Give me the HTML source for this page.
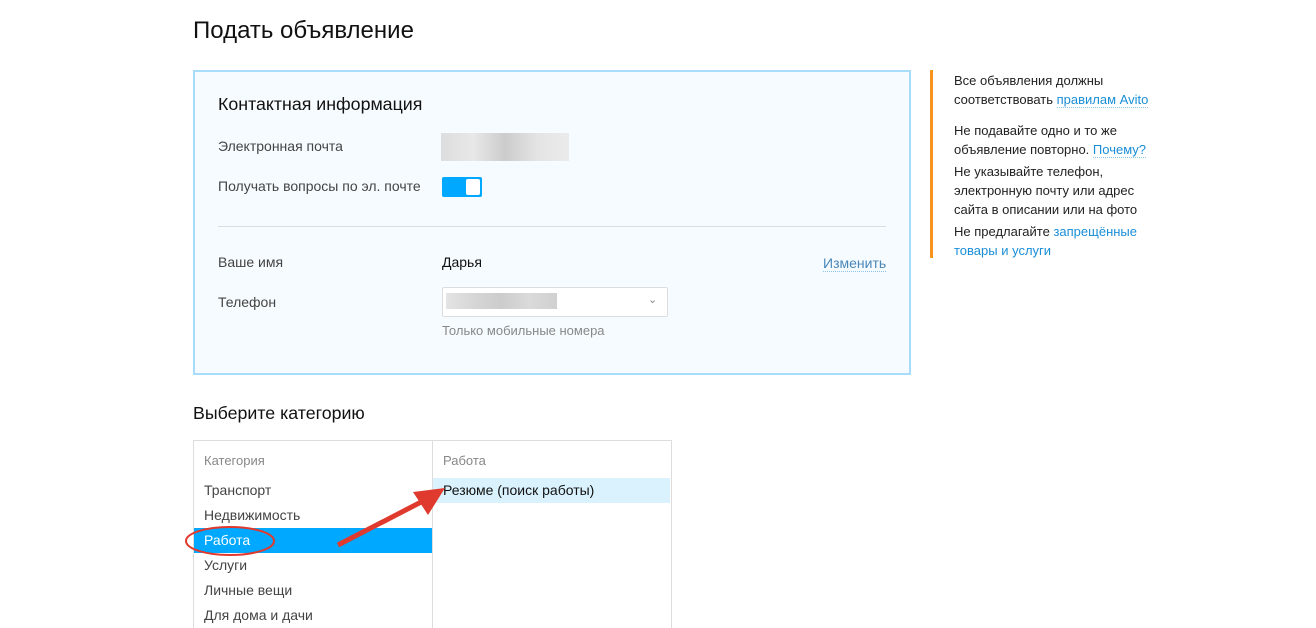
<!DOCTYPE html>
<html><head><meta charset="utf-8"><style>
html,body{margin:0;width:1316px;height:628px;overflow:hidden}
body{background:#fff;font-family:"Liberation Sans",Arial,sans-serif;position:relative;color:#222}
.a{position:absolute;white-space:nowrap}
.lbl{font-size:14px;color:#444}
.link{color:#1a8ed6;border-bottom:1px dotted #8cc3e8}
</style></head><body>
<div class="a" style="left:193px;top:17px;font-size:24px;color:#111">Подать объявление</div>
<div class="a" style="left:193px;top:70px;width:714px;height:301px;border:2px solid #a7dcfa;background:#f5fbff"></div>
<div class="a" style="left:218px;top:94px;font-size:17.8px;color:#111">Контактная информация</div>
<div class="a lbl" style="left:218px;top:138px">Электронная почта</div>
<div class="a" style="left:441px;top:133px;width:128px;height:28px;background:linear-gradient(90deg,#ddd,#e8e8e8,#ccc,#e4e4e4,#ebebeb)"></div>
<div class="a lbl" style="left:218px;top:178px">Получать вопросы по эл. почте</div>
<div class="a" style="left:442px;top:177px;width:40px;height:20px;background:#00a8ff;border-radius:2px"></div>
<div class="a" style="left:466px;top:179px;width:14px;height:16px;background:#fff;border-radius:2px"></div>
<div class="a" style="left:218px;top:226px;width:668px;height:1px;background:#ddd"></div>
<div class="a lbl" style="left:218px;top:254px">Ваше имя</div>
<div class="a" style="left:442px;top:254px;font-size:14px;color:#111">Дарья</div>
<div class="a link" style="left:823px;top:255px;font-size:14px;color:#4a86b8">Изменить</div>
<div class="a lbl" style="left:218px;top:294px">Телефон</div>
<div class="a" style="left:442px;top:287px;width:224px;height:28px;border:1px solid #ddd;background:#fff;border-radius:2px"></div>
<div class="a" style="left:446px;top:293px;width:111px;height:16px;background:linear-gradient(90deg,#e4e4e4,#d6d6d6,#ccc,#dadada,#d0d0d0)"></div>
<div class="a" style="left:648px;top:293px;font-size:11px;color:#888">&#8964;</div>
<div class="a" style="left:442px;top:323px;font-size:13px;color:#888">Только мобильные номера</div>
<div class="a" style="left:930px;top:70px;width:3px;height:188px;background:#f7941d"></div>
<div class="a" style="left:954px;top:71px;font-size:13px;line-height:19px;color:#222">Все объявления должны<br>соответствовать <span class="link">правилам Avito</span></div>
<div class="a" style="left:954px;top:121px;font-size:13px;line-height:19px;color:#222">Не подавайте одно и то же<br>объявление повторно. <span class="link">Почему?</span></div>
<div class="a" style="left:954px;top:162px;font-size:13px;line-height:19px;color:#222">Не указывайте телефон,<br>электронную почту или адрес<br>сайта в описании или на фото</div>
<div class="a" style="left:954px;top:222px;font-size:13px;line-height:19px;color:#222">Не предлагайте <span style="color:#1a8ed6">запрещённые</span><br><span style="color:#1a8ed6">товары и услуги</span></div>
<div class="a" style="left:193px;top:403px;font-size:17.8px;color:#111">Выберите категорию</div>
<div class="a" style="left:193px;top:440px;width:477px;height:188px;border:1px solid #ddd;border-bottom:none"></div>
<div class="a" style="left:432px;top:440px;width:1px;height:188px;background:#ddd"></div>
<div class="a" style="left:204px;top:453px;font-size:13px;color:#888">Категория</div>
<div class="a" style="left:443px;top:453px;font-size:13px;color:#888">Работа</div>
<div class="a" style="left:433px;top:478px;width:237px;height:25px;background:#daf2fd"></div>
<div class="a" style="left:443px;top:482px;font-size:14px;color:#111">Резюме (поиск работы)</div>
<div class="a" style="left:194px;top:528px;width:238px;height:25px;background:#00a8ff"></div>
<div class="a" style="left:204px;top:478px;font-size:14px;line-height:25px;color:#444">Транспорт<br>Недвижимость<br><span style="color:#fff">Работа</span><br>Услуги<br>Личные вещи<br>Для дома и дачи</div>
<svg class="a" style="left:0;top:0" width="1316" height="628">
<ellipse cx="230" cy="541" rx="44" ry="14" fill="none" stroke="#e03a2e" stroke-width="2"/>
<line x1="338" y1="545" x2="425" y2="500" stroke="#e03a2e" stroke-width="5"/>
<polygon points="445,488 413,492 428,515" fill="#e03a2e"/>
</svg>
</body></html>
